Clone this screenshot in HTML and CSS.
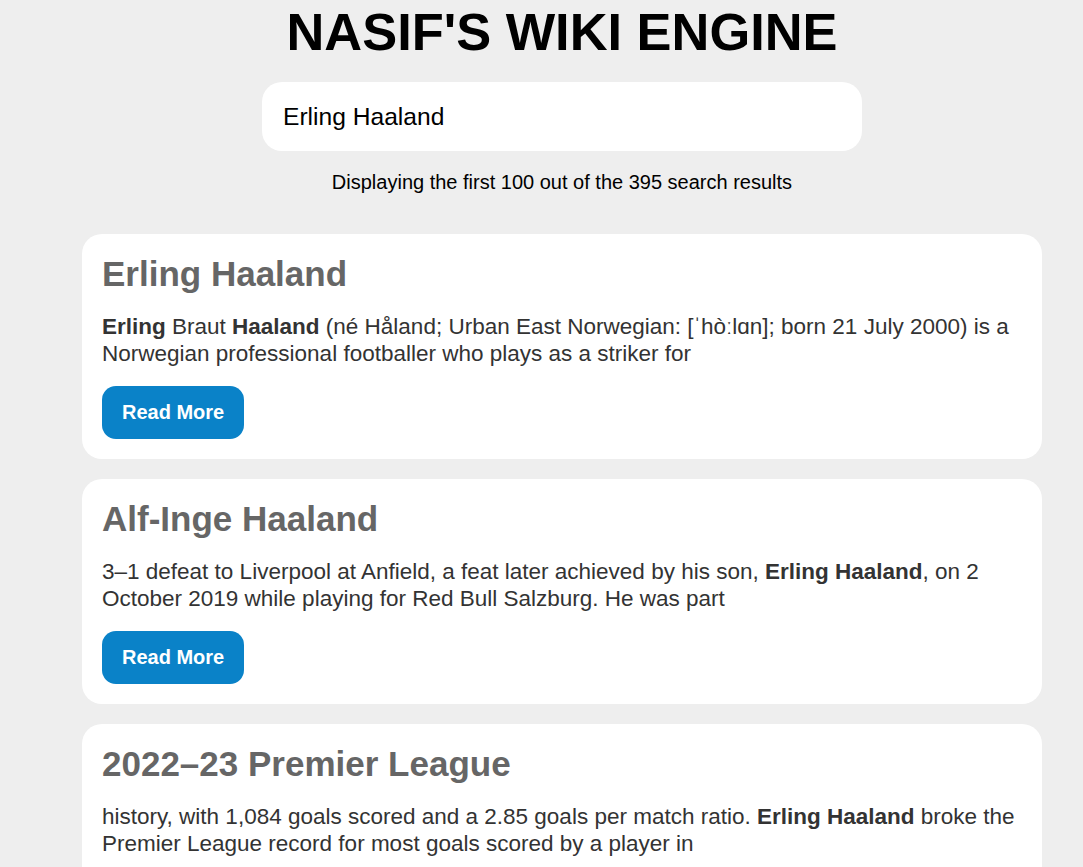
FILE: index.html
```html
<!DOCTYPE html>
<html>
<head>
<meta charset="utf-8">
<link rel="stylesheet" href="styles.css">
</head>
<body>
<div class="page">
  <h1 class="site-title">NASIF'S WIKI ENGINE</h1>
  <div class="search-box">Erling Haaland</div>
  <p class="result-count">Displaying the first 100 out of the 395 search results</p>
  <div class="results">
    <div class="card">
      <h2 class="card-title">Erling Haaland</h2>
      <p class="card-text"><b>Erling</b> Braut <b>Haaland</b> (né Håland; Urban East Norwegian: [ˈhòːlɑn]; born 21 July 2000) is a Norwegian professional footballer who plays as a striker for</p>
      <button class="read-more">Read More</button>
    </div>
    <div class="card">
      <h2 class="card-title">Alf-Inge Haaland</h2>
      <p class="card-text">3–1 defeat to Liverpool at Anfield, a feat later achieved by his son, <b>Erling Haaland</b>, on 2 October 2019 while playing for Red Bull Salzburg. He was part</p>
      <button class="read-more">Read More</button>
    </div>
    <div class="card">
      <h2 class="card-title">2022–23 Premier League</h2>
      <p class="card-text">history, with 1,084 goals scored and a 2.85 goals per match ratio. <b>Erling Haaland</b> broke the Premier League record for most goals scored by a player in</p>
      <button class="read-more">Read More</button>
    </div>
  </div>
</div>
</body>
</html>
```

FILE: styles.css
```css
html, body {
  margin: 0;
  padding: 0;
  background: #eeeeee;
  font-family: "Liberation Sans", Arial, sans-serif;
}

.page {
  width: 960px;
  margin-left: 82px;
  display: flex;
  flex-direction: column;
  align-items: center;
}

.site-title {
  margin: 0;
  padding-top: 3px;
  font-size: 52.4px;
  font-weight: bold;
  color: #000;
  line-height: 59px;
}

.search-box {
  box-sizing: border-box;
  width: 600px;
  height: 69px;
  margin-top: 20px;
  background: #fff;
  border-radius: 20px;
  padding: 0 21px;
  display: flex;
  align-items: center;
  font-size: 24.6px;
  color: #000;
}

.result-count {
  margin: 20px 0 0 0;
  font-size: 20px;
  line-height: 22px;
  color: #000;
}

.results {
  align-self: stretch;
  display: flex;
  flex-direction: column;
  gap: 20px;
  margin-top: 41px;
}

.card {
  background: #fff;
  border-radius: 20px;
  padding: 20px;
  display: flex;
  flex-direction: column;
  align-items: flex-start;
}

.card-title {
  margin: 0;
  font-size: 35px;
  font-weight: bold;
  color: #666666;
  line-height: 40px;
}

.card-text {
  margin: 20px 0 19px 0;
  font-size: 22.5px;
  line-height: 26.5px;
  color: #333333;
}

.card-text b {
  font-weight: bold;
}

.read-more {
  font-family: "Liberation Sans", Arial, sans-serif;
  font-size: 20px;
  font-weight: bold;
  color: #fff;
  background: #0a82c8;
  border: none;
  border-radius: 14px;
  padding: 0 20px;
  height: 53px;
}
```
